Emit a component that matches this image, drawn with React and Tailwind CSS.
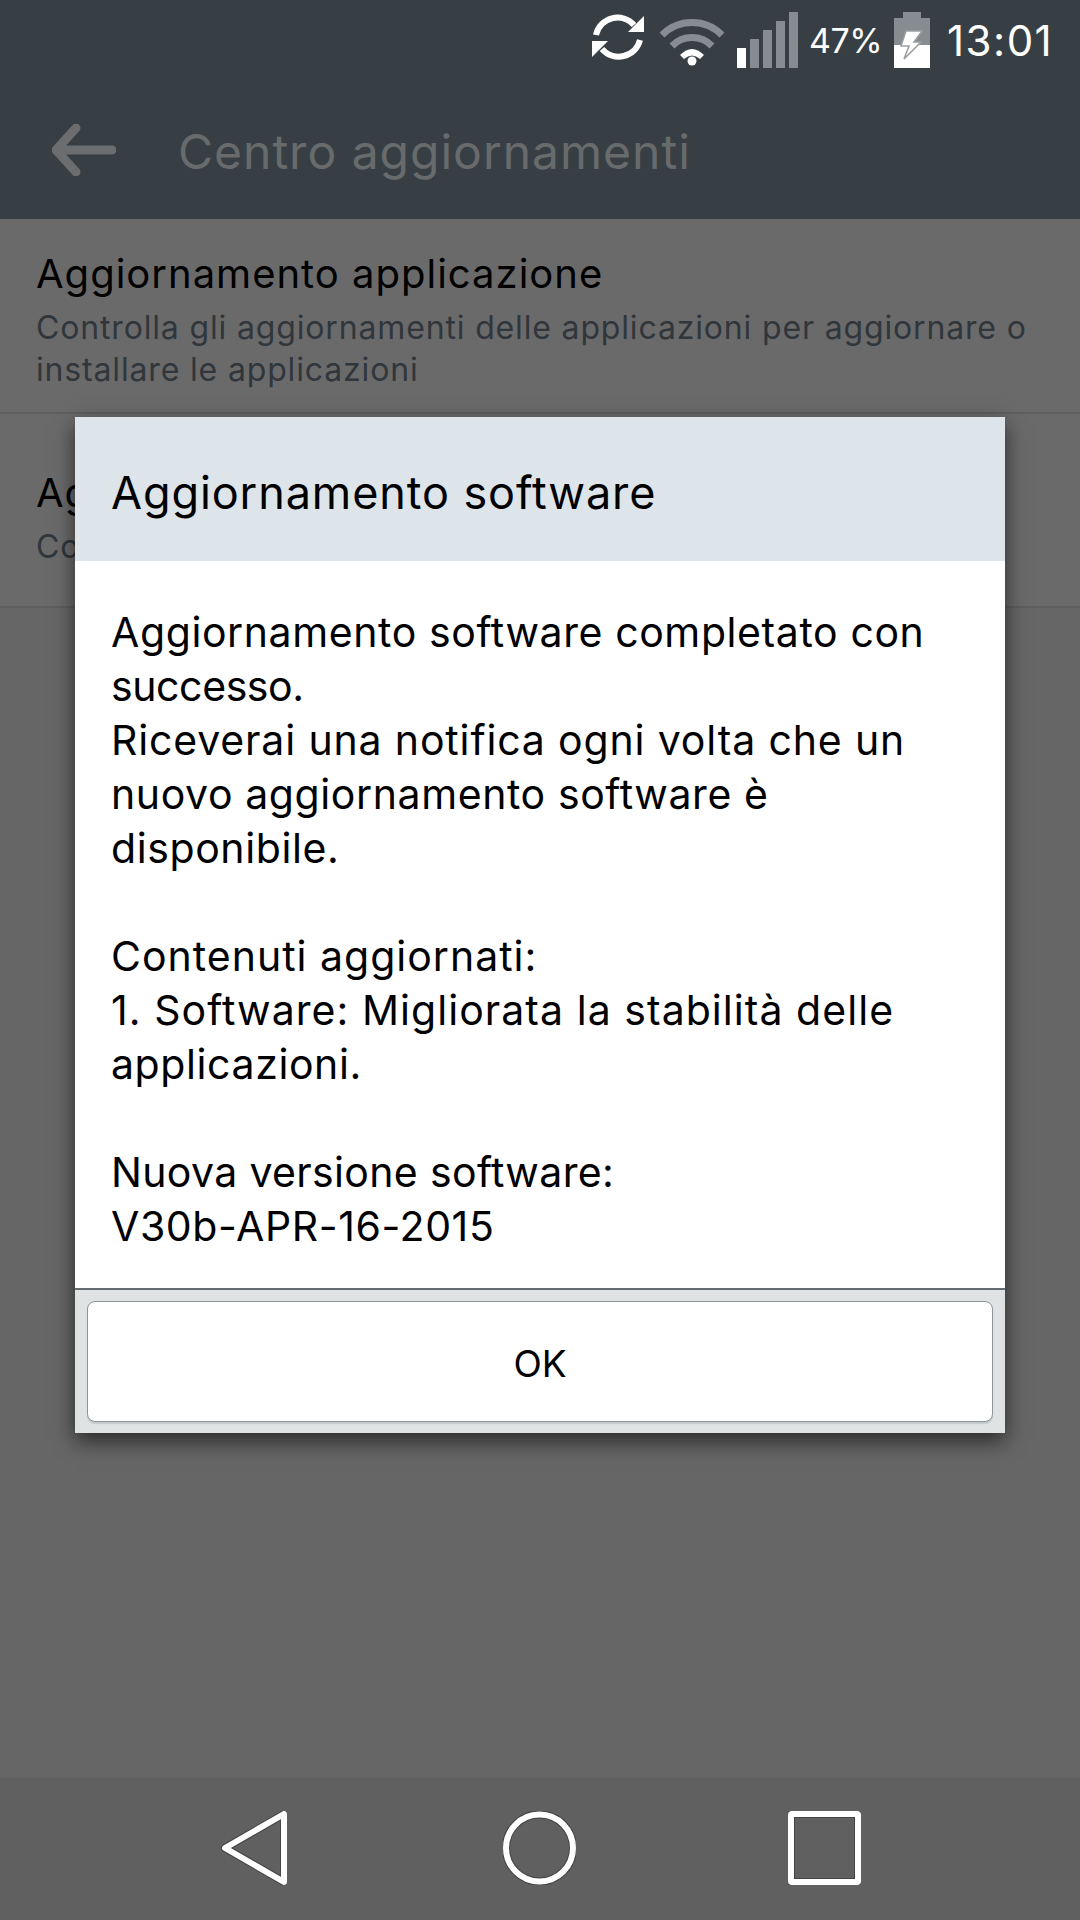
export default function App() {
  return (
    <div className="relative w-[1080px] h-[1920px] flex flex-col bg-[#666666] font-['Inter',sans-serif] overflow-hidden">
      {/* Status bar */}
      <div className="h-[76px] bg-[#373f45] flex items-center justify-end pr-[26px] text-white">
        <svg width="54" height="52" viewBox="0 0 54 52" className="mr-[14px] mb-[2px]">
          <path d="M5 24 A22 22 0 0 1 43 14" fill="none" stroke="#fff" strokeWidth="6" />
          <path d="M53 5 L53 21 L37 21 Z" fill="#fff" />
          <path d="M49 29 A22 22 0 0 1 11 38" fill="none" stroke="#fff" strokeWidth="6" />
          <path d="M1 46 L1 30 L17 30 Z" fill="#fff" />
        </svg>
        <svg width="66" height="50" viewBox="0 0 66 50" className="mr-[12px] mt-[5px]">
          <path d="M3 19 A42 42 0 0 1 63 19" fill="none" stroke="#868c8f" strokeWidth="7" />
          <path d="M13 30 A28 28 0 0 1 53 30" fill="none" stroke="#868c8f" strokeWidth="7" />
          <path d="M21 39 Q33 27 45 39 L41 43 Q33 36 25 43 Z" fill="#fff" />
          <circle cx="33" cy="45" r="4.5" fill="#fff" />
        </svg>
        <div className="flex items-end gap-[4px] h-[56px] mr-[11px] mt-[4px]">
          <div className="w-[9px] h-[20px] bg-white" />
          <div className="w-[9px] h-[29px] bg-[#868c8f]" />
          <div className="w-[9px] h-[38px] bg-[#868c8f]" />
          <div className="w-[9px] h-[47px] bg-[#868c8f]" />
          <div className="w-[9px] h-[56px] bg-[#868c8f]" />
        </div>
        <span className="text-[34px] leading-[40px] w-[72px] mr-[13px] mt-[5px] tracking-[-0.5px]">47%</span>
        <svg width="36" height="56" viewBox="0 0 36 56" className="mr-[17px] mt-[4px]">
          <rect x="9" y="0" width="18" height="7" fill="#868c8f" />
          <rect x="0" y="6" width="36" height="28" fill="#868c8f" />
          <rect x="0" y="33" width="36" height="23" fill="#fff" />
          <path d="M12 19 L28 19 L20 30 L27 30 L10 47 L15 34 L7 34 Z" fill="#fff" stroke="#9a9ea0" strokeWidth="1.5" />
        </svg>
        <span className="text-[42px] leading-[44px] w-[107px] mt-[5px] tracking-[1.5px] whitespace-nowrap">13:01</span>
      </div>

      {/* Toolbar */}
      <div className="h-[143px] bg-[#373f45] flex items-center">
        <svg width="64" height="52" viewBox="0 0 64 52" className="ml-[52px] mb-[-5px]">
          <path d="M24 4 L4 26 L24 48 M4 26 L60 26" fill="none" stroke="#6b6d6e" strokeWidth="9" strokeLinecap="round" strokeLinejoin="round" />
        </svg>
        <span className="ml-[62px] text-[48px] leading-[56px] tracking-[1px] text-[#686b6c] mt-[8px]">Centro aggiornamenti</span>
      </div>

      {/* List behind the dialog */}
      <div className="h-[195px] bg-[#6a6a6a] border-b-2 border-[#5e5e5e] pl-[36px] pt-[30px]">
        <p className="text-[40px] leading-[50px] tracking-[1px] text-black">Aggiornamento applicazione</p>
        <p className="mt-[8px] text-[32px] leading-[42px] tracking-[0.84px] text-[#30363b]">
          <span className="block">Controlla gli aggiornamenti delle applicazioni per aggiornare o</span>
          <span className="block">installare le applicazioni</span>
        </p>
      </div>
      <div className="h-[194px] bg-[#6a6a6a] border-b-2 border-[#5e5e5e] pl-[36px] pt-[54px]">
        <p className="text-[40px] leading-[50px] tracking-[1px] text-black">Aggiornamento software</p>
        <p className="mt-[8px] text-[32px] leading-[42px] tracking-[0.84px] text-[#30363b]">Controlla gli aggiornamenti software</p>
      </div>
      <div className="flex-1 bg-[#666666]" />

      {/* Navigation bar */}
      <div className="h-[142px] bg-[#606060] flex items-start pt-[33px] pl-[221px]">
        <svg width="66" height="74" viewBox="0 0 66 74">
          <path d="M63 3 L63 71 L4 37 Z" fill="none" stroke="#444" strokeWidth="8" strokeLinejoin="round" />
          <path d="M63 3 L63 71 L4 37 Z" fill="none" stroke="#fff" strokeWidth="6" strokeLinejoin="round" />
        </svg>
        <svg width="73" height="74" viewBox="0 0 73 74" className="ml-[216px]">
          <circle cx="36.5" cy="37" r="33.5" fill="none" stroke="#444" strokeWidth="8" />
          <circle cx="36.5" cy="37" r="33.5" fill="none" stroke="#fff" strokeWidth="6" />
        </svg>
        <svg width="73" height="74" viewBox="0 0 73 74" className="ml-[212px]">
          <rect x="3" y="3" width="67" height="68" rx="1" fill="none" stroke="#444" strokeWidth="8" />
          <rect x="3" y="3" width="67" height="68" rx="1" fill="none" stroke="#fff" strokeWidth="6" />
        </svg>
      </div>

      {/* Dialog */}
      <div className="absolute left-[75px] top-[417px] w-[930px] shadow-[0_8px_20px_rgba(0,0,0,0.6)]">
        <div className="h-[144px] bg-[#dde4ea] flex items-center pl-[36px] pt-[8px]">
          <span className="text-[45px] leading-[54px] tracking-[0.9px] text-black">Aggiornamento software</span>
        </div>
        <div className="bg-white pt-[44px] px-[36px] h-[727px] text-[41px] leading-[54px] tracking-[0.6px] text-black">
          <p>Aggiornamento software completato con</p>
          <p className="tracking-[-0.4px]">successo.</p>
          <p className="tracking-[0.85px]">Riceverai una notifica ogni volta che un</p>
          <p>nuovo aggiornamento software è</p>
          <p>disponibile.</p>
          <p className="mt-[54px] tracking-[1px]">Contenuti aggiornati:</p>
          <p className="tracking-[1.05px]">1. Software: Migliorata la stabilità delle</p>
          <p>applicazioni.</p>
          <p className="mt-[54px] tracking-[0.35px]">Nuova versione software:</p>
          <p>V30b-APR-16-2015</p>
        </div>
        <div className="h-[145px] bg-[#dfe3e4] border-t-2 border-[#666d70] pt-[11px] px-[12px]">
          <button className="w-full h-[121px] bg-white border border-[#8e959c] rounded-[8px] shadow-[0_2px_1px_#c4c9cc] text-[37px] text-black pt-[4px]">OK</button>
        </div>
      </div>
    </div>
  );
}
